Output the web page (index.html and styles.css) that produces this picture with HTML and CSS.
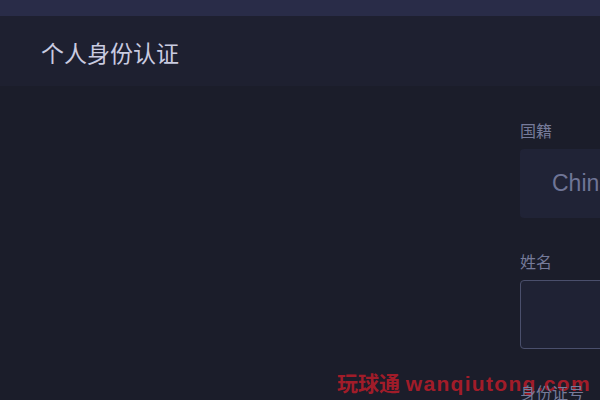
FILE: index.html
```html
<!DOCTYPE html>
<html lang="zh-CN">
<head>
  <meta charset="UTF-8">
  <title>个人身份认证</title>
  <meta name="viewport" content="width=device-width, initial-scale=1.0"/>
  <link rel="stylesheet" href="styles.css">
</head>
<body>
  <div class="topbar"></div>
  <header class="page-head">
    <h1>个人身份认证</h1>
  </header>

  <div class="watermark">玩球通 <span class="wm-url">wanqiutong.com</span></div>

  <main class="content">
    <form class="id-form">
      <div class="field">
        <label for="nation">国籍</label>
        <input type="text" id="nation" class="filled" value="China" readonly>
      </div>
      <div class="field">
        <label for="name">姓名</label>
        <input type="text" id="name" class="outlined">
      </div>
      <div class="field">
        <label for="idno">身份证号</label>
        <input type="text" id="idno" class="outlined">
      </div>
    </form>
  </main>
</body>
</html>
```

FILE: styles.css
```css
html, body {
  margin: 0;
  height: 100%;
  overflow: hidden;
}
body {
  font-family: "Noto Sans", "Noto Sans CJK SC", sans-serif;
  background-color: #1b1d2a;
  position: relative;
}
.topbar {
  height: 16px;
  background-color: #292c48;
}
.page-head {
  height: 70px;
  background-color: #1e2030;
  display: flex;
  align-items: center;
  padding-left: 41px;
}
.page-head h1 {
  margin: 0;
  font-family: "Noto Sans CJK SC", sans-serif;
  font-weight: 400;
  font-size: 23px;
  color: #c9cbe0;
  line-height: 1;
  margin-top: 2px;
}
.content {
  padding: 33px 0 0 520px;
}
.id-form {
  width: 420px;
}
.field {
  display: flex;
  flex-direction: column;
  margin-bottom: 32px;
}
.field label {
  font-family: "Noto Sans CJK SC", sans-serif;
  font-size: 16px;
  line-height: 22px;
  color: #767b9a;
  margin-bottom: 8px;
  position: relative;
  z-index: 2;
}
.field input {
  box-sizing: border-box;
  height: 69px;
  width: 100%;
  border-radius: 4px;
  padding: 0 32px;
  font-family: "Liberation Sans", Arial, sans-serif;
  font-size: 23px;
  color: #6f7596;
  outline: none;
}
.field input.filled {
  background-color: #202336;
  border: none;
}
.field input.outlined {
  background-color: #1f2234;
  border: 1px solid #4a4f6c;
}
.watermark {
  position: absolute;
  left: 337px;
  top: 367px;
  font-family: "Liberation Sans", "Noto Sans CJK SC", sans-serif;
  font-weight: 700;
  font-size: 21px;
  color: #a11c29;
  white-space: nowrap;
  z-index: 1;
  pointer-events: none;
}
.wm-url {
  letter-spacing: 1.3px;
}
```
